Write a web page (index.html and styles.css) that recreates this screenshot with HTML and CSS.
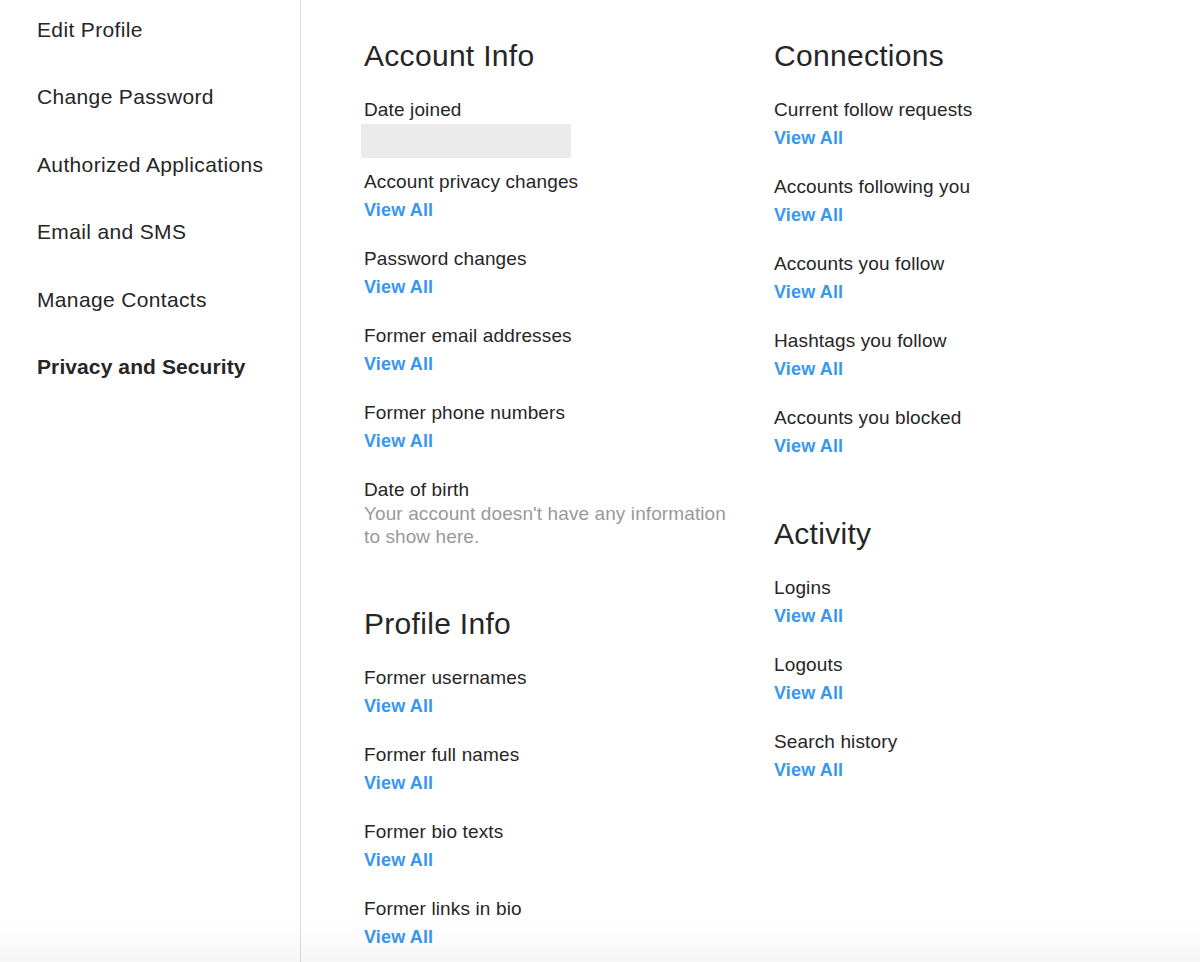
FILE: index.html
```html
<!DOCTYPE html>
<html lang="en">
<head>
<meta charset="utf-8">
<title>Privacy and Security</title>
<link rel="stylesheet" href="styles.css">
</head>
<body>
<div class="page">
  <nav class="sidebar">
    <a class="nav-item" href="#">Edit Profile</a>
    <a class="nav-item" href="#">Change Password</a>
    <a class="nav-item" href="#">Authorized Applications</a>
    <a class="nav-item" href="#">Email and SMS</a>
    <a class="nav-item" href="#">Manage Contacts</a>
    <a class="nav-item active" href="#">Privacy and Security</a>
  </nav>
  <main class="content">
    <div class="column">
      <section class="section">
        <h2 class="section-title">Account Info</h2>
        <div class="item item-joined">
          <div class="item-label">Date joined</div>
          <div class="joined-box"></div>
        </div>
        <div class="item">
          <div class="item-label">Account privacy changes</div>
          <a class="item-link" href="#">View All</a>
        </div>
        <div class="item">
          <div class="item-label">Password changes</div>
          <a class="item-link" href="#">View All</a>
        </div>
        <div class="item">
          <div class="item-label">Former email addresses</div>
          <a class="item-link" href="#">View All</a>
        </div>
        <div class="item">
          <div class="item-label">Former phone numbers</div>
          <a class="item-link" href="#">View All</a>
        </div>
        <div class="item">
          <div class="item-label">Date of birth</div>
          <div class="item-empty">Your account doesn't have any information to show here.</div>
        </div>
      </section>
      <section class="section">
        <h2 class="section-title">Profile Info</h2>
        <div class="item">
          <div class="item-label">Former usernames</div>
          <a class="item-link" href="#">View All</a>
        </div>
        <div class="item">
          <div class="item-label">Former full names</div>
          <a class="item-link" href="#">View All</a>
        </div>
        <div class="item">
          <div class="item-label">Former bio texts</div>
          <a class="item-link" href="#">View All</a>
        </div>
        <div class="item">
          <div class="item-label">Former links in bio</div>
          <a class="item-link" href="#">View All</a>
        </div>
      </section>
    </div>
    <div class="column">
      <section class="section">
        <h2 class="section-title">Connections</h2>
        <div class="item">
          <div class="item-label">Current follow requests</div>
          <a class="item-link" href="#">View All</a>
        </div>
        <div class="item">
          <div class="item-label">Accounts following you</div>
          <a class="item-link" href="#">View All</a>
        </div>
        <div class="item">
          <div class="item-label">Accounts you follow</div>
          <a class="item-link" href="#">View All</a>
        </div>
        <div class="item">
          <div class="item-label">Hashtags you follow</div>
          <a class="item-link" href="#">View All</a>
        </div>
        <div class="item">
          <div class="item-label">Accounts you blocked</div>
          <a class="item-link" href="#">View All</a>
        </div>
      </section>
      <section class="section">
        <h2 class="section-title">Activity</h2>
        <div class="item">
          <div class="item-label">Logins</div>
          <a class="item-link" href="#">View All</a>
        </div>
        <div class="item">
          <div class="item-label">Logouts</div>
          <a class="item-link" href="#">View All</a>
        </div>
        <div class="item">
          <div class="item-label">Search history</div>
          <a class="item-link" href="#">View All</a>
        </div>
      </section>
    </div>
  </main>
</div>
<div class="edge-shade"></div>
</body>
</html>
```

FILE: styles.css
```css
html, body {
  margin: 0;
  padding: 0;
  height: 100%;
  overflow: hidden;
  background: #ffffff;
}

body {
  font-family: "Liberation Sans", Arial, Helvetica, sans-serif;
  color: #262626;
}

.page {
  display: flex;
  min-height: 962px;
}

.sidebar {
  width: 301px;
  flex: 0 0 301px;
  border-right: 1px solid #dbdbdb;
  box-sizing: border-box;
  padding: 18px 0 0 37px;
  display: flex;
  flex-direction: column;
  gap: 43.4px;
}

.nav-item {
  font-size: 21px;
  line-height: 24px;
  letter-spacing: 0.35px;
  color: #262626;
  text-decoration: none;
}

.nav-item.active {
  font-weight: 700;
  letter-spacing: 0.1px;
}

.content {
  flex: 1;
  padding: 38px 0 0 63px;
  display: grid;
  grid-template-columns: 410px 410px;
  align-items: start;
}

.column {
  display: flex;
  flex-direction: column;
  gap: 58px;
}

.section {
  display: flex;
  flex-direction: column;
}

.section-title {
  margin: 0 0 24px;
  font-size: 30px;
  line-height: 36px;
  font-weight: 400;
  letter-spacing: 0.3px;
  color: #262626;
}

.item {
  margin-bottom: 25px;
  display: flex;
  flex-direction: column;
  align-items: flex-start;
}

.item:last-child {
  margin-bottom: 0;
}

.item-joined {
  margin-bottom: 12px;
}

.item-label {
  font-size: 19px;
  line-height: 24px;
  letter-spacing: 0.13px;
}

.item-link {
  margin-top: 4px;
  font-size: 18px;
  line-height: 24px;
  font-weight: 700;
  letter-spacing: 0.15px;
  color: #3897f0;
  text-decoration: none;
}

.item-empty {
  font-size: 19px;
  line-height: 23px;
  letter-spacing: 0.1px;
  color: #999999;
  max-width: 375px;
}

.joined-box {
  margin: 2px 0 0 -3px;
  width: 210px;
  height: 34px;
  background: #ebebeb;
}

.edge-shade {
  position: fixed;
  left: 0;
  right: 0;
  bottom: 0;
  height: 40px;
  pointer-events: none;
  background: linear-gradient(to bottom, rgba(0,0,0,0) 0%, rgba(0,0,0,0.035) 100%);
}
```
